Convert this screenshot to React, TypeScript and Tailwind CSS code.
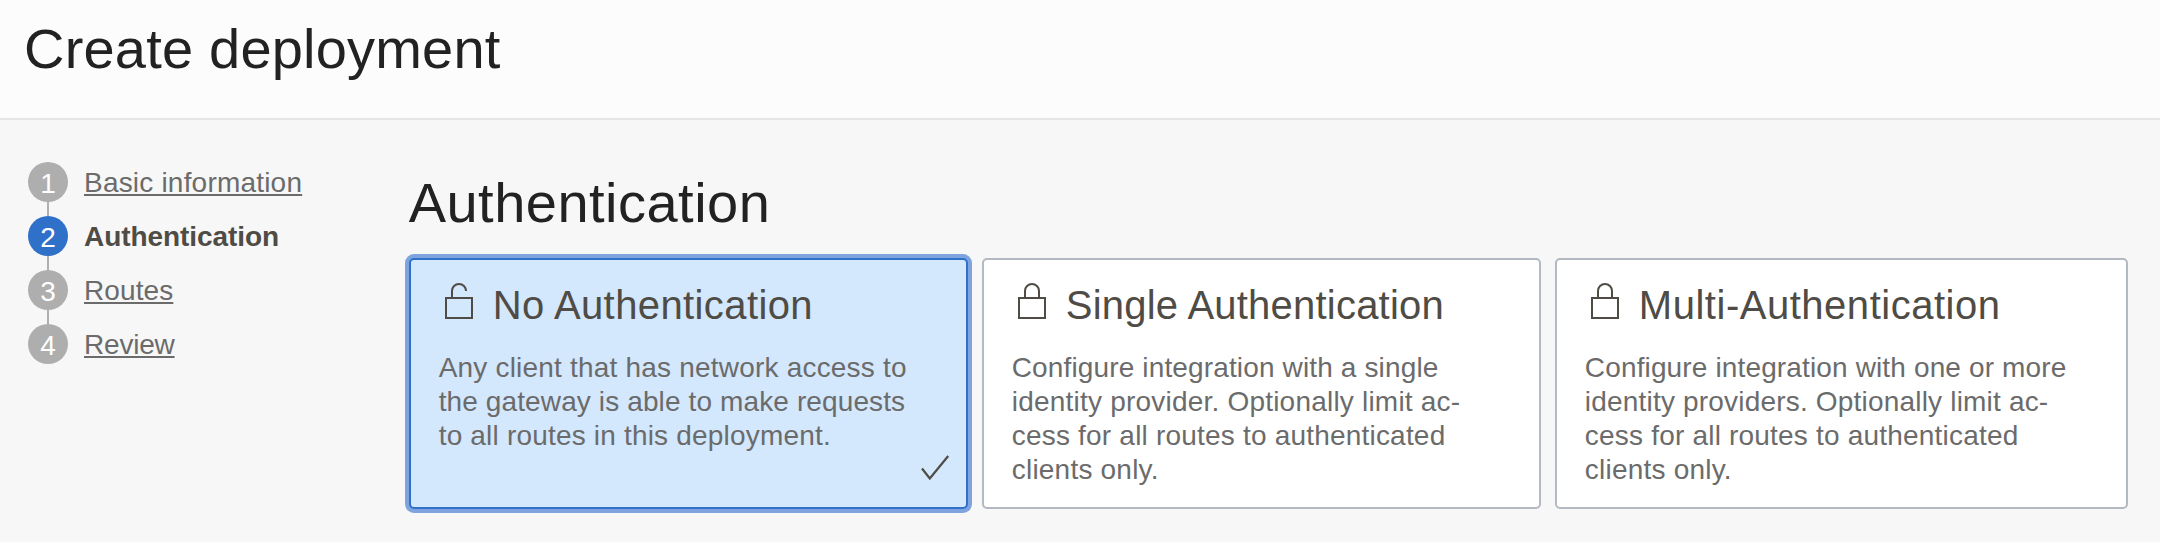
type Line = { text: string; tracking: string };
type Step = { label: string; tracking: string; active?: boolean };
type Card = { title: string; titleTracking: string; lines: Line[]; selected?: boolean };

const steps: Step[] = [
  { label: 'Basic information', tracking: 'tracking-[0.2px]' },
  { label: 'Authentication', tracking: 'tracking-[-0.07px]', active: true },
  { label: 'Routes', tracking: 'tracking-[0.1px]' },
  { label: 'Review', tracking: 'tracking-[-0.2px]' },
];

const cards: Card[] = [
  {
    title: 'No Authentication',
    titleTracking: 'tracking-[0.4px]',
    selected: true,
    lines: [
      { text: 'Any client that has network access to', tracking: 'tracking-[0.2px]' },
      { text: 'the gateway is able to make requests', tracking: 'tracking-[0.12px]' },
      { text: 'to all routes in this deployment.', tracking: 'tracking-[0.19px]' },
    ],
  },
  {
    title: 'Single Authentication',
    titleTracking: 'tracking-[0.22px]',
    lines: [
      { text: 'Configure integration with a single', tracking: 'tracking-[0.14px]' },
      { text: 'identity provider. Optionally limit ac-', tracking: 'tracking-[0.21px]' },
      { text: 'cess for all routes to authenticated', tracking: 'tracking-[0.2px]' },
      { text: 'clients only.', tracking: 'tracking-[0.21px]' },
    ],
  },
  {
    title: 'Multi-Authentication',
    titleTracking: 'tracking-[0.52px]',
    lines: [
      { text: 'Configure integration with one or more', tracking: 'tracking-[0.14px]' },
      { text: 'identity providers. Optionally limit ac-', tracking: 'tracking-[0.19px]' },
      { text: 'cess for all routes to authenticated', tracking: 'tracking-[0.2px]' },
      { text: 'clients only.', tracking: 'tracking-[0.21px]' },
    ],
  },
];

function LockIcon({ open }: { open?: boolean }) {
  return (
    <svg width="28" height="36" viewBox="0 0 28 36" fill="none" stroke="#4f4b45" strokeWidth="2" className="shrink-0">
      <path d="M1 15H27V35H1Z" />
      {open ? <path d="M7 15V8A7 7 0 0 1 21 8" /> : <path d="M7 15V8A7 7 0 0 1 21 8V15" />}
    </svg>
  );
}

function StepItem({ step, index }: { step: Step; index: number }) {
  return (
    <li>
      {index > 0 && <div className="ml-[19px] h-3.5 w-0.5 bg-[#aeaeae]" />}
      <div className="flex h-10 items-center">
        <span
          className={`flex size-10 items-center justify-center rounded-full pt-[3px] text-[28px] leading-[37px] text-white ${
            step.active ? 'bg-[#2f70c9]' : 'bg-[#aeaeae]'
          }`}
        >
          {index + 1}
        </span>
        {step.active ? (
          <span className={`ml-4 pt-0.5 font-bold text-[#4f4b45] ${step.tracking}`}>{step.label}</span>
        ) : (
          <a
            className={`ml-4 pt-0.5 text-[#6b6b6b] underline decoration-2 underline-offset-2 [text-decoration-skip-ink:none] ${step.tracking}`}
          >
            {step.label}
          </a>
        )}
      </div>
    </li>
  );
}

function AuthCard({ card, last }: { card: Card; last: boolean }) {
  return (
    <div className={`w-1/3 shrink-0 ${last ? '' : 'pr-3.5'}`}>
      <div
        className={`relative h-[251px] rounded-[5px] border-2 pt-[21px] pl-7 ${
          card.selected
            ? 'border-[#2f70c9] bg-[#d3e7fd] shadow-[0_0_0_4px_#7fa3de]'
            : 'border-[#b3b9c0] bg-white'
        }`}
      >
        <div className="flex h-12">
          <div className="ml-1.5 pt-0.5">
            <LockIcon open={card.selected} />
          </div>
          <h3 className={`ml-5 text-[40px] leading-12 whitespace-nowrap text-[#4f4b45] ${card.titleTracking}`}>
            {card.title}
          </h3>
        </div>
        <p className="mt-[22px] leading-[34px] whitespace-nowrap text-[#6b6b6b]">
          {card.lines.map((line) => (
            <span key={line.text} className={`block ${line.tracking}`}>
              {line.text}
            </span>
          ))}
        </p>
        {card.selected && (
          <svg
            className="absolute right-4 bottom-[25px]"
            width="30"
            height="28"
            viewBox="0 0 30 28"
            fill="none"
            stroke="#4f4b45"
            strokeWidth="2.2"
          >
            <path d="M2 14.5L9.8 24.5L28.2 2" />
          </svg>
        )}
      </div>
    </div>
  );
}

export default function App() {
  return (
    <div className="flex h-[542px] w-[2160px] flex-col overflow-hidden bg-[#f7f7f7] font-['Liberation_Sans',Arial,sans-serif] text-[28px]">
      <header className="h-[120px] border-b-2 border-[#e5e5e5] bg-[#fcfcfc] pt-[17px] pl-6">
        <h1 className="text-[56px] leading-16 tracking-[0.2px] text-[#222222]">Create deployment</h1>
      </header>
      <div className="flex flex-1">
        <nav className="w-[408.67px] shrink-0 pt-[42px] pl-7">
          <ol>
            {steps.map((step, i) => (
              <StepItem key={step.label} step={step} index={i} />
            ))}
          </ol>
        </nav>
        <main className="w-[1719.33px] pt-[51px]">
          <h2 className="text-[56px] leading-16 tracking-[0.48px] text-[#222222]">Authentication</h2>
          <div className="mt-[23px] flex">
            {cards.map((card, i) => (
              <AuthCard key={card.title} card={card} last={i === cards.length - 1} />
            ))}
          </div>
        </main>
      </div>
    </div>
  );
}
